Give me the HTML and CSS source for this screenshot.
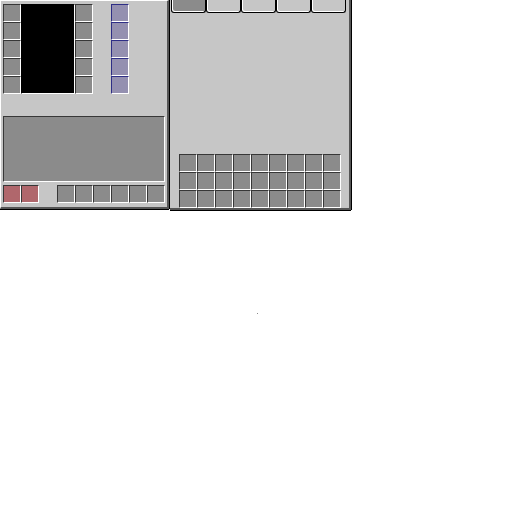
FILE: index.html
```html
<!DOCTYPE html>
<html>
<head>
<meta charset="utf-8">
<link rel="stylesheet" href="styles.css">
</head>
<body>
<div class="gui">
  <div class="panel left">
    <div class="top">
      <div class="col">
        <div class="slot"></div><div class="slot"></div><div class="slot"></div><div class="slot"></div><div class="slot"></div>
      </div>
      <div class="screen"></div>
      <div class="col">
        <div class="slot"></div><div class="slot"></div><div class="slot"></div><div class="slot"></div><div class="slot"></div>
      </div>
      <div class="col blue">
        <div class="slot"></div><div class="slot"></div><div class="slot"></div><div class="slot"></div><div class="slot"></div>
      </div>
    </div>
    <div class="area"></div>
    <div class="bottom">
      <div class="row red">
        <div class="slot"></div><div class="slot"></div>
      </div>
      <div class="row">
        <div class="slot"></div><div class="slot"></div><div class="slot"></div><div class="slot"></div><div class="slot"></div><div class="slot"></div>
      </div>
    </div>
  </div>
  <div class="panel right">
    <div class="tabs">
      <div class="tab active"></div><div class="tab"></div><div class="tab"></div><div class="tab"></div><div class="tab"></div>
    </div>
    <div class="grid">
      <div class="slot"></div><div class="slot"></div><div class="slot"></div><div class="slot"></div><div class="slot"></div><div class="slot"></div><div class="slot"></div><div class="slot"></div><div class="slot"></div>
      <div class="slot"></div><div class="slot"></div><div class="slot"></div><div class="slot"></div><div class="slot"></div><div class="slot"></div><div class="slot"></div><div class="slot"></div><div class="slot"></div>
      <div class="slot"></div><div class="slot"></div><div class="slot"></div><div class="slot"></div><div class="slot"></div><div class="slot"></div><div class="slot"></div><div class="slot"></div><div class="slot"></div>
    </div>
  </div>
</div>
<div class="dot"></div>
</body>
</html>
```
FILE: styles.css
```css
* { box-sizing: border-box; }
html, body { margin: 0; padding: 0; background: #fff; }
body { width: 512px; height: 512px; position: relative; font-family: "Liberation Sans", sans-serif; }

.gui { display: flex; align-items: flex-start; }

.panel { background: #c6c6c6; }

.left {
  width: 169px;
  height: 209px;
  border-left: 1px solid #fff;
  border-top: 1px solid #fff;
  border-right: 2px solid #555;
  border-bottom: 2px solid #555;
  box-shadow: 1px 0 0 #000, 0 1px 0 #000;
  padding: 3px 0 0 2px;
  display: flex;
  flex-direction: column;
}

.right {
  margin-left: 1px;
  width: 181px;
  height: 210px;
  border-right: 2px solid #555;
  border-bottom: 2px solid #555;
  box-shadow: 1px 0 0 #000, 0 1px 0 #000;
  padding: 0 0 0 1px;
  display: flex;
  flex-direction: column;
}

.slot {
  width: 18px;
  height: 18px;
  background: #8b8b8b;
  border-top: 1px solid #373737;
  border-left: 1px solid #373737;
  border-right: 1px solid #fff;
  border-bottom: 1px solid #fff;
}

.top { display: flex; height: 90px; }
.col { display: flex; flex-direction: column; }
.col.blue { margin-left: 18px; }
.col.blue .slot { background: #9490b0; border-top-color: #2e2e86; border-left-color: #2e2e86; }

.screen {
  width: 54px;
  height: 90px;
  background: #000;
  border-top: 1px solid #000;
  border-left: 1px solid #000;
  border-right: 1px solid #fff;
  border-bottom: 1px solid #fff;
}

.area {
  margin-top: 22px;
  width: 162px;
  height: 66px;
  background: #8b8b8b;
  border-top: 1px solid #373737;
  border-left: 1px solid #373737;
  border-right: 1px solid #fff;
  border-bottom: 1px solid #fff;
}

.bottom { margin-top: 3px; display: flex; gap: 18px; }
.row { display: flex; }
.row.red .slot { background: #b0676c; }

.tabs { display: flex; height: 13px; }
.tab {
  width: 35px;
  height: 13px;
  background: #c6c6c6;
  border: 1px solid #000;
  border-top: none;
  border-radius: 0 0 3px 3px;
  box-shadow: inset 1px -1px 0 #fff;
}
.tab.active { background: #8b8b8b; }

.grid {
  margin-top: auto;
  margin-left: 8px;
  display: grid;
  grid-template-columns: repeat(9, 18px);
  grid-auto-rows: 18px;
  width: 162px;
}

.dot {
  position: absolute;
  left: 257px;
  top: 313px;
  width: 1px;
  height: 1px;
  background: #8a8a8a;
}
```
